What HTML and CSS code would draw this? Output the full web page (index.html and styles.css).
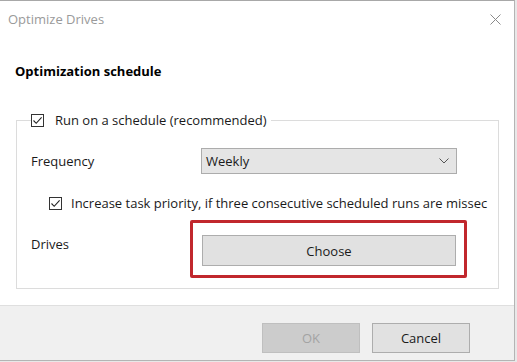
FILE: index.html
```html
<!DOCTYPE html>
<html lang="en">
<head>
    <meta charset="UTF-8">
    <meta name="viewport" content="width=device-width, initial-scale=1.0">
    <title>Optimize Drives</title>
    <link rel="stylesheet" href="styles.css">
</head>
<body>
    <div class="dialog">
        <div class="titlebar">
            <span class="title">Optimize Drives</span>
            <svg class="close" width="11" height="11" viewBox="0 0 11 11">
                <path d="M0.5 0.5 L10.5 10.5 M10.5 0.5 L0.5 10.5" stroke="#8a8a8a" stroke-width="1" fill="none"/>
            </svg>
        </div>

        <div class="content">
            <h2 class="heading">Optimization schedule</h2>

            <fieldset class="group">
                <legend class="check">
                    <span class="box">
                        <svg width="11" height="11" viewBox="0 0 11 11"><path d="M1.5 5.5 L4.2 8.3 L9.6 2.4" stroke="#222" stroke-width="1.1" fill="none"/></svg>
                    </span>
                    Run on a schedule (recommended)
                </legend>

                <div class="row">
                    <span class="label">Frequency</span>
                    <div class="select">
                        <span>Weekly</span>
                        <svg width="10" height="6" viewBox="0 0 10 6"><path d="M0.5 0.5 L5 5 L9.5 0.5" stroke="#555" stroke-width="1" fill="none"/></svg>
                    </div>
                </div>

                <div class="check sub">
                    <span class="box">
                        <svg width="11" height="11" viewBox="0 0 11 11"><path d="M1.5 5.5 L4.2 8.3 L9.6 2.4" stroke="#222" stroke-width="1.1" fill="none"/></svg>
                    </span>
                    Increase task priority, if three consecutive scheduled runs are missec
                </div>

                <div class="row drives">
                    <span class="label">Drives</span>
                    <div class="highlight">
                        <button class="btn wide">Choose</button>
                    </div>
                </div>
            </fieldset>
        </div>

        <div class="footer">
            <button class="btn disabled">OK</button>
            <button class="btn">Cancel</button>
        </div>
    </div>
</body>
</html>
```

FILE: styles.css
```css
* {
    margin: 0;
    padding: 0;
    box-sizing: border-box;
}

body {
    font-family: "Open Sans", "Noto Sans", sans-serif;
    font-size: 13px;
    color: #1a1a1a;
    background: #e8e8e8;
    width: 517px;
    height: 362px;
    overflow: hidden;
}

.dialog {
    width: 515px;
    height: 361px;
    background: white;
    border-top: 1px solid #a8a8a8;
    border-right: 1px solid #b4b4b4;
    border-bottom: 1px solid #b4b4b4;
    display: flex;
    flex-direction: column;
}

.titlebar {
    height: 36px;
    display: flex;
    align-items: center;
    justify-content: space-between;
    padding: 0 13px 0 8px;
}

.title {
    color: #9a9a9a;
    font-size: 13px;
}

.content {
    flex: 1;
    padding: 0 15px 0 16px;
}

.heading {
    font-size: 13px;
    font-weight: 700;
    color: #000;
    margin: 24px 0 0 -1px;
    line-height: 20px;
}

.group {
    border: 1px solid #dcdcdc;
    margin-top: 31px;
    padding: 0 0 10px 14px;
}

.check {
    display: flex;
    align-items: center;
    gap: 11px;
    line-height: 16px;
    padding-right: 4px;
}

.box {
    width: 13px;
    height: 13px;
    border: 1px solid #333;
    display: flex;
    align-items: center;
    justify-content: center;
    background: white;
}

.row {
    display: flex;
    align-items: center;
}

.label {
    width: 170px;
}

.row:first-of-type {
    margin-top: 20px;
}

.select {
    width: 256px;
    height: 26px;
    background: #e5e5e5;
    border: 1px solid #acacac;
    display: flex;
    align-items: center;
    justify-content: space-between;
    padding: 0 7px 0 4px;
}

.sub {
    margin: 20px 0 0 18px;
    height: 18px;
    gap: 9px;
    white-space: nowrap;
    overflow: hidden;
}

.drives {
    margin-top: 8px;
    align-items: flex-start;
}

.drives .label {
    width: 159px;
    padding-top: 15px;
}

.highlight {
    border: 3px solid #c1272d;
    border-radius: 2px;
    padding: 12px 8px 9px 9px;
}

.btn {
    font-family: inherit;
    font-size: 13px;
    color: #1a1a1a;
    background: #e1e1e1;
    border: 1px solid #adadad;
    width: 98px;
    height: 30px;
}

.btn.wide {
    width: 254px;
    height: 31px;
    display: block;
}

.btn.disabled {
    background: #cccccc;
    border-color: #bfbfbf;
    color: #a3a3a3;
}

.footer {
    height: 55px;
    background: #f0f0f0;
    border-top: 1px solid #dfdfdf;
    display: flex;
    justify-content: flex-end;
    align-items: flex-start;
    gap: 12px;
    padding: 17px 44px 0 0;
}
```
